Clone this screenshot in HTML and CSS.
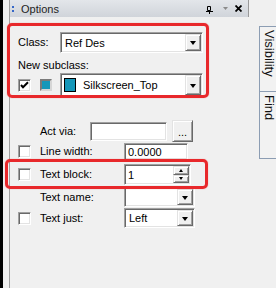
FILE: index.html
```html
<!DOCTYPE html>
<html lang="en">
<head>
  <meta charset="UTF-8" />
  <title>Options</title>
  <link rel="stylesheet" href="styles.css">
</head>
<body>
  <div class="app">
    <div class="edge"></div>

    <div class="panel">
      <div class="titlebar">
        <span class="grip"><i></i><i></i></span>
        <span class="title">Options</span>
        <span class="tools">
          <svg class="pin" width="7" height="8" viewBox="0 0 7 8">
            <path d="M1.5 0.5h3v4h-3z M0 5.5h7 M3.5 5.5v3" fill="none" stroke="#000" stroke-width="1"/>
          </svg>
          <svg class="menu" width="5" height="3" viewBox="0 0 5 3">
            <path d="M0 0h5l-2.5 3z" fill="#8a8a8a"/>
          </svg>
          <svg class="close" width="7" height="7" viewBox="0 0 7 7">
            <path d="M0.5 0.5l6 6 M6.5 0.5l-6 6" stroke="#000" stroke-width="1.8"/>
          </svg>
        </span>
      </div>

      <div class="form">
        <div class="row row-class">
          <span class="lbl lbl-class">Class:</span>
          <div class="combo sunken combo-class">
            <span class="val">Ref Des</span>
            <span class="drop raised"><i class="arrow"></i></span>
          </div>
        </div>

        <div class="lbl lbl-sub">New subclass:</div>

        <div class="row row-sub">
          <span class="check sunken">
            <svg width="9" height="9" viewBox="0 0 9 9">
              <path d="M1 4l2 2.2 5-5" fill="none" stroke="#000" stroke-width="2"/>
            </svg>
          </span>
          <span class="color-btn"></span>
          <div class="combo sunken combo-sub">
            <span class="swatch"></span>
            <span class="val">Silkscreen_Top</span>
            <span class="drop raised"><i class="arrow"></i></span>
          </div>
        </div>

        <div class="row row-act">
          <span class="lbl lbl-act">Act via:</span>
          <span class="input sunken input-act"></span>
          <span class="btn raised">...</span>
        </div>

        <div class="row row-line">
          <span class="check sunken"></span>
          <span class="lbl lbl-wide">Line width:</span>
          <span class="input sunken input-line">0.0000</span>
        </div>

        <div class="row row-block">
          <span class="check sunken"></span>
          <span class="lbl lbl-wide">Text block:</span>
          <div class="spin sunken">
            <span class="val">1</span>
            <span class="spin-btns">
              <span class="raised"><i class="up"></i></span>
              <span class="raised"><i class="down"></i></span>
            </span>
          </div>
        </div>

        <div class="row row-name">
          <span class="nocheck"></span>
          <span class="lbl lbl-wide">Text name:</span>
          <div class="combo sunken combo-small">
            <span class="val"></span>
            <span class="drop raised"><i class="arrow"></i></span>
          </div>
        </div>

        <div class="row row-just">
          <span class="check sunken"></span>
          <span class="lbl lbl-wide">Text just:</span>
          <div class="combo sunken combo-small">
            <span class="val">Left</span>
            <span class="drop raised"><i class="arrow"></i></span>
          </div>
        </div>
      </div>

      <div class="mark mark-class"></div>
      <div class="mark mark-block"></div>
    </div>

    <div class="side">
      <div class="tab tab-vis">Visibility</div>
      <div class="tab tab-find">Find</div>
    </div>
  </div>
</body>
</html>
```

FILE: styles.css
```css
body {
  margin: 0;
  background-color: #f0f0f0;
  font-family: 'Liberation Sans', Arial, sans-serif;
  font-size: 11px;
  color: #000;
}
.app {
  display: flex;
  width: 276px;
  height: 288px;
  overflow: hidden;
}
.edge {
  width: 3px;
  margin-right: 6px;
  background-color: #000;
}
.panel {
  position: relative;
  width: 239px;
  border-left: 1px solid #a0a0a0;
}

/* title bar */
.titlebar {
  display: flex;
  align-items: center;
  height: 17px;
  padding-left: 2px;
  border-right: 1px solid #9a9a9a;
  background: linear-gradient(#e3e6ea, #d0d4da);
}
.grip {
  display: flex;
  flex-direction: column;
  gap: 2px;
  width: 2px;
  margin-right: 7px;
}
.grip i {
  width: 2px;
  height: 2px;
  background-color: #3567c8;
}
.title {
  font-size: 11px;
  color: #1e1e1e;
}
.tools {
  display: flex;
  align-items: center;
  margin-left: auto;
  margin-right: 6px;
}
.pin {
  margin-right: 10px;
  margin-top: 2px;
}
.menu {
  margin-right: 7px;
}

/* form */
.form {
  padding: 15px 0 0 8px;
}
.row {
  display: flex;
  align-items: center;
}
.lbl {
  line-height: 13px;
  white-space: nowrap;
}
.lbl-class {
  width: 42px;
}
.lbl-sub {
  margin-top: 6px;
}
.lbl-act {
  width: 50px;
  margin-left: 22px;
}
.lbl-wide {
  width: 84px;
}
.row-class { height: 21px; }
.row-sub { height: 24px; margin-top: 1px; }
.row-act { height: 22px; margin-top: 23px; }
.row-line { height: 17px; margin-top: 1px; }
.row-block { height: 21px; margin-top: 4px; }
.row-name { height: 20px; margin-top: 2px; }
.row-just { height: 20px; margin-top: 1px; }

/* 3d borders */
.sunken {
  box-sizing: border-box;
  border: 1px solid;
  border-color: #a0a0a0 #fff #fff #a0a0a0;
  box-shadow: inset 1px 1px 0 #696969, inset -1px -1px 0 #e3e3e3;
  background-color: #fff;
}
.raised {
  box-sizing: border-box;
  border: 1px solid;
  border-color: #e3e3e3 #696969 #696969 #e3e3e3;
  box-shadow: inset 1px 1px 0 #fff, inset -1px -1px 0 #a0a0a0;
  background-color: #f0f0f0;
}

.check {
  display: flex;
  align-items: center;
  justify-content: center;
  width: 13px;
  height: 13px;
  margin-right: 9px;
}
.nocheck {
  width: 22px;
}
.color-btn {
  box-sizing: border-box;
  width: 12px;
  height: 12px;
  margin-right: 8px;
  border: 2px solid;
  border-color: #7a7a7a #d6d6d6 #d6d6d6 #7a7a7a;
  background-color: #1597b9;
}

/* combo boxes */
.combo {
  display: flex;
  align-items: stretch;
  padding: 1px;
  height: 100%;
}
.combo .val {
  flex: 1;
  display: flex;
  align-items: center;
  padding-left: 3px;
  white-space: nowrap;
  overflow: hidden;
}
.drop {
  display: flex;
  align-items: center;
  justify-content: center;
  width: 16px;
}
.arrow {
  width: 0;
  height: 0;
  margin-top: 1px;
  border-left: 3.5px solid transparent;
  border-right: 3.5px solid transparent;
  border-top: 4px solid #000;
}
.combo-class {
  width: 143px;
}
.combo-sub {
  width: 143px;
}
.combo-sub .val {
  padding-left: 7px;
}
.swatch {
  align-self: center;
  width: 10px;
  height: 12px;
  margin-left: 2px;
  border: 1px solid #000;
  background-color: #1597b9;
}
.combo-small {
  width: 71px;
}

/* inputs and buttons */
.input {
  display: flex;
  align-items: center;
  padding-left: 3px;
  height: 100%;
}
.input-act {
  width: 77px;
  height: 19px;
  margin-right: 5px;
}
.input-line {
  width: 64px;
}
.btn {
  display: flex;
  align-items: flex-end;
  justify-content: center;
  width: 21px;
  height: 22px;
  padding-bottom: 5px;
  line-height: 8px;
}
.spin {
  display: flex;
  width: 67px;
  height: 100%;
  padding: 1px;
}
.spin .val {
  flex: 1;
  display: flex;
  align-items: center;
  padding-left: 2px;
}
.spin-btns {
  display: flex;
  flex-direction: column;
  width: 16px;
}
.spin-btns span {
  flex: 1;
  display: flex;
  align-items: center;
  justify-content: center;
}
.up, .down {
  width: 0;
  height: 0;
  border-left: 2.5px solid transparent;
  border-right: 2.5px solid transparent;
}
.up { border-bottom: 3px solid #000; }
.down { border-top: 3px solid #000; }

/* red highlights drawn over the panel */
.mark {
  position: absolute;
  box-sizing: border-box;
  border: 3px solid #e8282b;
  border-radius: 5px;
  box-shadow: 0 0 1px rgba(232, 40, 43, 0.6);
}
.mark-class {
  left: -3px;
  top: 23px;
  width: 202px;
  height: 75px;
}
.mark-block {
  left: -5px;
  top: 159px;
  width: 203px;
  height: 30px;
}

/* side tabs */
.side {
  width: 27px;
  padding-top: 26px;
}
.tab {
  box-sizing: border-box;
  margin-left: 10px;
  width: 18px;
  padding-top: 3px;
  border: 1px solid #8c9db3;
  border-right: none;
  background-color: #f2f2f2;
  writing-mode: vertical-rl;
  font-size: 13px;
  line-height: 16px;
  color: #111;
}
.tab-vis {
  height: 66px;
}
.tab-find {
  height: 68px;
  margin-top: -1px;
}
```
